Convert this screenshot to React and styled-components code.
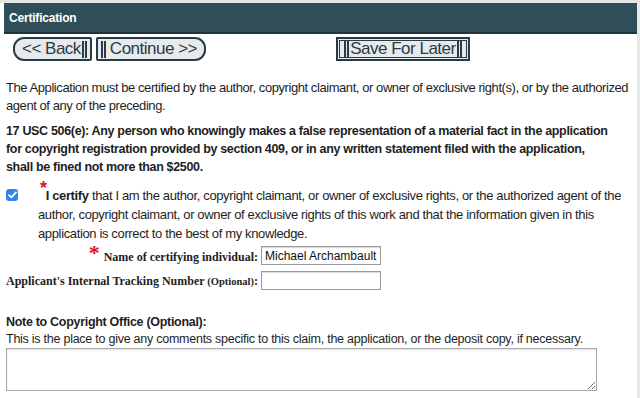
import React, { useState } from 'react';
import styled, { createGlobalStyle } from 'styled-components';

const GlobalStyle = createGlobalStyle`
  html, body {
    margin: 0;
    padding: 0;
    background: #fff;
  }
  body {
    font-family: "Liberation Sans", Arial, sans-serif;
    color: #1e1e1e;
  }
`;

const Page = styled.div`
  width: 640px;
  height: 398px;
  box-sizing: border-box;
  border-top: 3px solid #e4e4e4;
  border-right: 3px solid #e8e8e8;
  padding-left: 4px;
  overflow: hidden;
`;

const Header = styled.div`
  height: 29px;
  background: #2f4e59;
  border-bottom: 2px solid #1d3540;
  color: #fff;
  font-size: 12px;
  font-weight: bold;
  display: flex;
  align-items: center;
  padding-left: 5px;
  letter-spacing: -0.2px;
`;

const ButtonRow = styled.div`
  display: flex;
  align-items: center;
  padding: 3px 0 0 9px;
`;

const NavButton = styled.button`
  display: inline-flex;
  align-items: center;
  justify-content: space-between;
  white-space: nowrap;
  height: 24px;
  width: ${p => p.$w}px;
  box-sizing: border-box;
  padding: 0 ${p => (p.$round === 'left' ? '3px' : '7px')} 0 ${p => (p.$round === 'left' ? '7px' : '3px')};
  margin-right: ${p => p.$gap || 0}px;
  background: #e6eaec;
  border: 2px solid #2b3b45;
  border-radius: ${p => (p.$round === 'left' ? '11px 2px 2px 11px' : '2px 11px 11px 2px')};
  font-family: "Liberation Sans", Arial, sans-serif;
  font-size: 17px;
  color: #2b3a44;
  letter-spacing: -0.5px;
  cursor: pointer;
`;

const SaveButton = styled(NavButton)`
  border-radius: 0;
  box-shadow: inset 0 0 0 1px #e6eaec, inset 0 0 0 2px #2b3b45;
  padding: 0 6px;
`;

const Bars = styled.span`
  display: inline-block;
  flex: none;
  width: 1px;
  height: 17px;
  border-left: 2px solid #2b3a44;
  border-right: 2px solid #2b3a44;
`;

const Content = styled.div`
  padding: 0 0 0 2px;
  font-size: 13px;
  line-height: 18px;
`;

const Para = styled.p`
  margin: ${p => p.$mt || 0}px 0 0;
  font-size: ${p => (p.$bold ? 12.5 : 13)}px;
  font-weight: ${p => (p.$bold ? 'bold' : 'normal')};
  letter-spacing: ${p => (p.$bold ? -0.33 : -0.43)}px;
  white-space: nowrap;
`;

const CertifyRow = styled.div`
  display: grid;
  grid-template-columns: 32px 1fr;
  margin-top: 10px;
  line-height: 19px;
`;

const CheckCell = styled.div`
  padding-top: 3px;
`;

const Check = styled.span`
  width: 12px;
  height: 12px;
  border-radius: 3px;
  background: #2f86e6;
  display: flex;
  align-items: center;
  justify-content: center;
`;

const CertifyText = styled.div`
  letter-spacing: -0.36px;
  white-space: nowrap;
`;

const Star = styled.span`
  position: relative;
  top: ${p => p.$top || 0}px;
  color: #e0121b;
  font-size: ${p => p.$size || 18}px;
  font-weight: bold;
  line-height: 0;
  margin: 0 ${p => p.$mr || 0}px 0 ${p => p.$ml || 0}px;
`;

const FieldGrid = styled.div`
  display: grid;
  grid-template-columns: 252px 120px;
  column-gap: 3px;
  row-gap: 3px;
  margin-top: 2px;
  align-items: center;
`;

const FieldLabel = styled.label`
  display: flex;
  justify-content: flex-end;
  align-items: baseline;
  font-family: "Liberation Serif", "Times New Roman", serif;
  font-weight: bold;
  font-size: 12px;
  white-space: pre;
  padding-top: 3px;
`;

const Small = styled.span`
  font-size: 10.5px;
`;

const TextInput = styled.input`
  width: 120px;
  height: 19px;
  box-sizing: border-box;
  border: 1px solid #9a9a9a;
  box-shadow: inset 0 1px 1px rgba(0, 0, 0, 0.15);
  padding: 0 3px;
  font-family: "Liberation Sans", Arial, sans-serif;
  font-size: 12px;
  color: #111;
  outline: none;
`;

const NoteTitle = styled.div`
  margin-top: 23px;
  font-size: 12.5px;
  font-weight: bold;
  letter-spacing: -0.3px;
  line-height: 17px;
`;

const NoteHint = styled.div`
  font-size: 12.5px;
  letter-spacing: -0.25px;
  line-height: 17px;
`;

const NoteArea = styled.textarea`
  display: block;
  width: 591px;
  height: 43px;
  box-sizing: border-box;
  margin-top: 0;
  border: 1px solid #a9a9a9;
  box-shadow: inset 0 1px 2px rgba(0, 0, 0, 0.12);
  resize: vertical;
  outline: none;
  font-family: "Liberation Sans", Arial, sans-serif;
`;

export default function App() {
  const [name, setName] = useState('Michael Archambault');
  const [tracking, setTracking] = useState('');
  const [note, setNote] = useState('');

  return (
    <>
      <GlobalStyle />
      <Page>
        <Header>Certification</Header>
        <ButtonRow>
          <NavButton $round="left" $w={79} $gap={4}>
            &lt;&lt; Back <Bars />
          </NavButton>
          <NavButton $round="right" $w={110} $gap={130}>
            <Bars /> Continue &gt;&gt;
          </NavButton>
          <SaveButton $w={134}>
            <Bars /> Save For Later <Bars />
          </SaveButton>
        </ButtonRow>
        <Content>
          <Para $mt={18}>
            The Application must be certified by the author, copyright claimant, or owner of exclusive right(s), or by the authorized
            <br />
            agent of any of the preceding.
          </Para>
          <Para $mt={7} $bold>
            17 USC 506(e): Any person who knowingly makes a false representation of a material fact in the application
            <br />
            for copyright registration provided by section 409, or in any written statement filed with the application,
            <br />
            shall be fined not more than $2500.
          </Para>
          <CertifyRow>
            <CheckCell>
              <Check>
                <svg width="9" height="8" viewBox="0 0 9 8">
                  <path d="M1 4.2 L3.4 6.4 L8 1.3" fill="none" stroke="#fff" strokeWidth="1.8" strokeLinecap="round" strokeLinejoin="round" />
                </svg>
              </Check>
            </CheckCell>
            <CertifyText>
              <Star $size={18} $top={-6} $ml={2} $mr={-1}>*</Star>
              <b>I certify</b> that I am the author, copyright claimant, or owner of exclusive rights, or the authorized agent of the
              <br />
              author, copyright claimant, or owner of exclusive rights of this work and that the information given in this
              <br />
              application is correct to the best of my knowledge.
            </CertifyText>
          </CertifyRow>
          <FieldGrid>
            <FieldLabel>
              <Star $size={22} $top={-1} $mr={4}>*</Star>Name of certifying individual:
            </FieldLabel>
            <TextInput value={name} onChange={e => setName(e.target.value)} />
            <FieldLabel>
              Applicant's Internal Tracking Number <Small>(Optional)</Small>:
            </FieldLabel>
            <TextInput value={tracking} onChange={e => setTracking(e.target.value)} />
          </FieldGrid>
          <NoteTitle>Note to Copyright Office (Optional):</NoteTitle>
          <NoteHint>This is the place to give any comments specific to this claim, the application, or the deposit copy, if necessary.</NoteHint>
          <NoteArea value={note} onChange={e => setNote(e.target.value)} />
        </Content>
      </Page>
    </>
  );
}
